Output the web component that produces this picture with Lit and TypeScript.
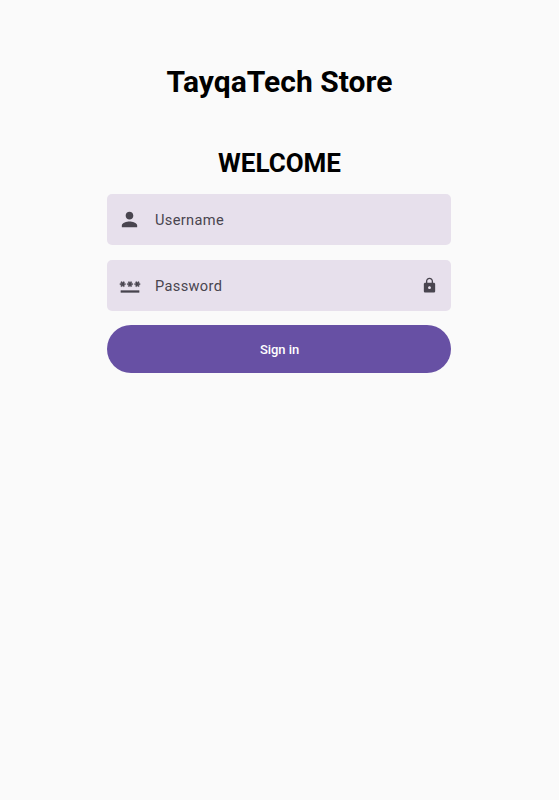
import { LitElement, html, css } from "lit";
import { customElement } from "lit/decorators.js";

@customElement("app-root")
class AppRoot extends LitElement {
  static styles = css`
    :host { display: block; min-height: 800px; background: #fafafa; font-family: Roboto, sans-serif; color: #000; }
    .page { width: 344px; margin: 0 auto 0 107px; padding-top: 64px; box-sizing: border-box; display: flex; flex-direction: column; }
    h1, h2 { margin: 0; padding-left: 1px; text-align: center; font-weight: 700; white-space: nowrap; }
    h1 { font-size: 30px; line-height: 36px; letter-spacing: 0.02px; }
    h2 { margin: 47px 0 15px; font-size: 26px; line-height: 32px; }
    .field { height: 51px; margin-bottom: 15px; background: #e7e0ec; border-radius: 5px; display: flex; align-items: center; padding: 0 11px; box-sizing: border-box; color: #49454f; }
    .field + button { margin-top: -1px; }
    .label { flex: 1; margin-left: 15px; padding-top: 1px; font-size: 14.6px; line-height: 18px; letter-spacing: 0.35px; }
    svg { display: block; width: 22px; height: 22px; fill: currentColor; }
    .person { width: 23px; height: 23px; margin: 0 -0.5px; }
    .password { margin: 0 -0.5px 0 0.5px; stroke: currentColor; stroke-width: 0.35; }
    .lock { width: 17px; height: 17px; margin-right: 2px; }
    button { height: 48px; border: 0; border-radius: 24px; background: #6750a4; color: #fff; font: 500 13px Roboto, sans-serif; letter-spacing: -0.05px; padding: 1px 0 0 1px; }
  `;
  render() {
    return html`<main class="page">
      <h1>TayqaTech Store</h1>
      <h2>WELCOME</h2>
      <div class="field">
        <svg class="person" viewBox="0 0 24 24"><path d="M12 12c2.21 0 4-1.79 4-4s-1.79-4-4-4-4 1.79-4 4 1.79 4 4 4zm0 2c-2.67 0-8 1.34-8 4v2h16v-2c0-2.66-5.33-4-8-4z"/></svg>
        <span class="label">Username</span>
      </div>
      <div class="field">
        <svg class="password" viewBox="0 0 24 24"><path d="M2 17h20v2H2v-2zm1.15-4.05L4 11.47l.85 1.48 1.3-.75-.85-1.48H7v-1.5H5.3l.85-1.47L4.85 7 4 8.47 3.15 7l-1.3.75.85 1.47H1v1.5h1.7l-.85 1.48 1.3.75zm6.7-.75l1.3.75.85-1.48.85 1.48 1.3-.75-.85-1.48H15v-1.5h-1.7l.85-1.47-1.3-.75L12 8.47 11.15 7l-1.3.75.85 1.47H9v1.5h1.7l-.85 1.48zM23 9.22h-1.7l.85-1.47-1.3-.75L20 8.47 19.15 7l-1.3.75.85 1.47H17v1.5h1.7l-.85 1.48 1.3.75.85-1.48.85 1.48 1.3-.75-.85-1.48H23v-1.5z"/></svg>
        <span class="label">Password</span>
        <svg class="lock" viewBox="0 0 24 24"><path d="M18 8h-1V6c0-2.76-2.24-5-5-5S7 3.24 7 6v2H6c-1.1 0-2 .9-2 2v10c0 1.1.9 2 2 2h12c1.1 0 2-.9 2-2V10c0-1.1-.9-2-2-2zm-6 9c-1.1 0-2-.9-2-2s.9-2 2-2 2 .9 2 2-.9 2-2 2zm3.1-9H8.9V6c0-1.71 1.39-3.1 3.1-3.1s3.1 1.39 3.1 3.1v2z"/></svg>
      </div>
      <button>Sign in</button>
    </main>`;
  }
}
